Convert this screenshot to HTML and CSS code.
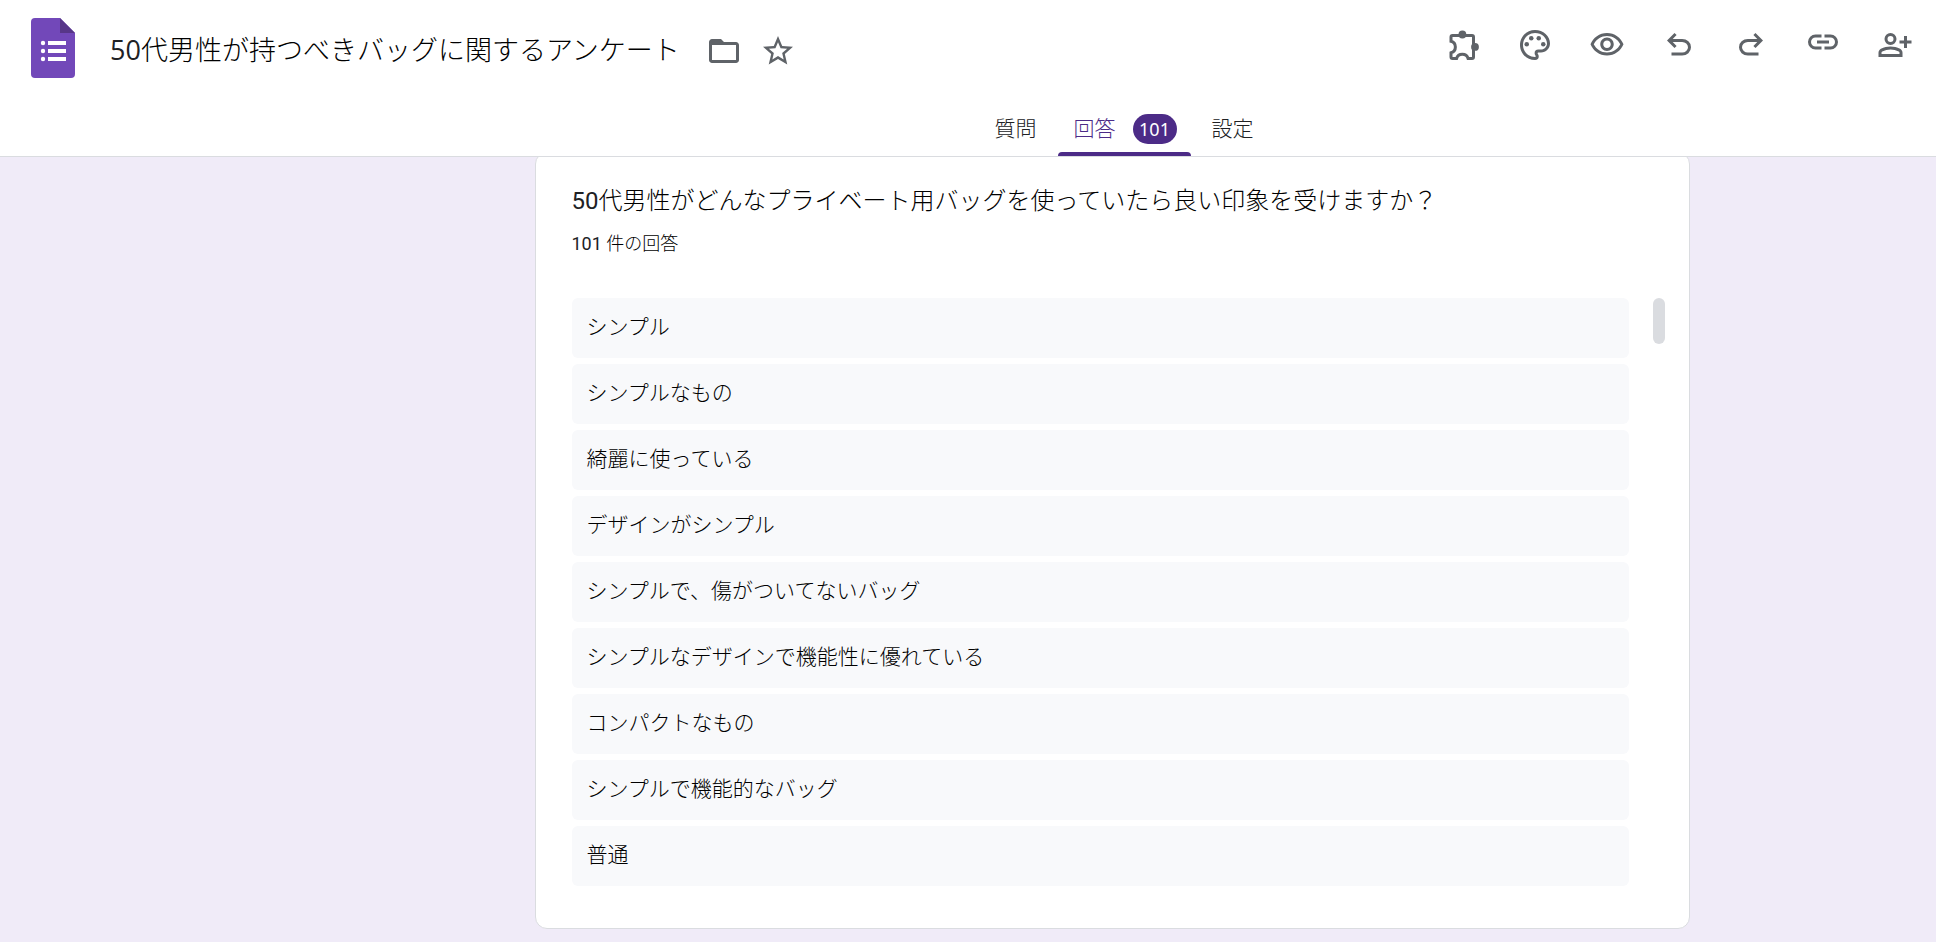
FILE: index.html
```
<!DOCTYPE html>
<html lang="ja">
<head>
<meta charset="utf-8">
<meta name="viewport" content="width=device-width, initial-scale=1">
<title>50代男性が持つべきバッグに関するアンケート</title>
<link rel="stylesheet" href="styles.css">
</head>
<body>
<header class="header">
  <div class="topbar">
    <div class="brand">
      <a class="logo" href="#" aria-label="フォーム ホーム">
        <svg width="44" height="60" viewBox="0 0 44 60" aria-hidden="true">
          <path fill="#7248b9" d="M4 0h25l15 15v41a4 4 0 0 1-4 4H4a4 4 0 0 1-4-4V4a4 4 0 0 1 4-4z"/>
          <path fill="#573688" d="M29 0l15 15H29z"/>
          <g fill="#fff">
            <circle cx="12" cy="25" r="2.2"/><circle cx="12" cy="33" r="2.2"/><circle cx="12" cy="41" r="2.2"/>
            <path d="M17 23h18v4H17zM17 31h18v4H17zM17 39h18v4H17z"/>
          </g>
        </svg>
      </a>
      <h1 class="title"><span class="title-number">50</span>代男性が持つべきバッグに関するアンケート</h1>
      <div class="title-actions">
        <button class="icon-button" type="button" aria-label="フォルダに移動">
          <svg class="icon" viewBox="0 0 24 24" aria-hidden="true"><path d="M4 20q-.825 0-1.412-.587T2 18V6q0-.825.588-1.412T4 4h6l2 2h8q.825 0 1.413.588T22 8v10q0 .825-.587 1.413T20 20zm0-2h16V8H4z"/></svg>
        </button>
        <button class="icon-button" type="button" aria-label="スターを付ける">
          <svg class="icon" viewBox="0 0 24 24" aria-hidden="true"><path d="M22 9.24l-7.19-.62L12 2 9.19 8.63 2 9.24l5.46 4.73L5.82 21 12 17.27 18.18 21l-1.63-7.03L22 9.24zM12 15.4l-3.76 2.27 1-4.28-3.32-2.88 4.38-.38L12 6.1l1.71 4.04 4.38.38-3.32 2.88 1 4.28L12 15.4z"/></svg>
        </button>
      </div>
    </div>
    <div class="toolbar">
      <button class="tool" type="button" aria-label="アドオン">
        <svg class="icon" viewBox="0 0 24 24" aria-hidden="true"><path fill="none" stroke="currentColor" stroke-width="2" d="M4 9.5V6.7a1 1 0 0 1 1-1h13a1 1 0 0 1 1 1V20a1 1 0 0 1-1 1h-2.6a4 4 0 0 0-7.7 0H5a1 1 0 0 1-1-1v-2.8a4 4 0 0 0 0-7.7z"/><circle cx="11.6" cy="5" r="2.6"/><circle cx="20" cy="13.3" r="2.6"/></svg>
      </button>
      <button class="tool" type="button" aria-label="テーマをカスタマイズ">
        <svg class="icon" viewBox="0 0 24 24" aria-hidden="true"><path d="M12 22C6.49 22 2 17.51 2 12S6.49 2 12 2s10 4.04 10 9c0 3.31-2.69 6-6 6h-1.77c-.28 0-.5.22-.5.5 0 .12.05.23.13.33.41.47.64 1.06.64 1.67A2.5 2.5 0 0 1 12 22zm0-18c-4.41 0-8 3.59-8 8s3.59 8 8 8c.28 0 .5-.22.5-.5a.54.54 0 0 0-.14-.35c-.41-.46-.63-1.05-.63-1.65a2.5 2.5 0 0 1 2.5-2.5H16c2.21 0 4-1.79 4-4 0-3.86-3.59-7-8-7z"/><circle cx="6.5" cy="11.5" r="1.5"/><circle cx="9.5" cy="7.5" r="1.5"/><circle cx="14.5" cy="7.5" r="1.5"/><circle cx="17.5" cy="11.5" r="1.5"/></svg>
      </button>
      <button class="tool" type="button" aria-label="プレビュー">
        <svg class="icon" viewBox="0 0 24 24" aria-hidden="true"><path d="M12 6c3.79 0 7.17 2.13 8.82 5.5C19.17 14.87 15.79 17 12 17s-7.17-2.13-8.82-5.5C4.83 8.13 8.21 6 12 6m0-2C7 4 2.73 7.11 1 11.5 2.73 15.89 7 19 12 19s9.27-3.11 11-7.5C21.27 7.11 17 4 12 4zm0 5c1.38 0 2.5 1.12 2.5 2.5S13.38 14 12 14s-2.5-1.12-2.5-2.5S10.62 9 12 9m0-2c-2.48 0-4.5 2.02-4.5 4.5S9.52 16 12 16s4.5-2.02 4.5-4.5S14.48 7 12 7z"/></svg>
      </button>
      <button class="tool" type="button" aria-label="元に戻す">
        <svg class="icon" viewBox="0 0 24 24" aria-hidden="true"><path d="M7 19v-2h7.1q1.575 0 2.738-1T18 13.5 16.838 11 14.1 10H7.8l2.6 2.6L9 14 4 9l5-5 1.4 1.4L7.8 8h6.3q2.425 0 4.163 1.575T20 13.5t-1.738 3.925T14.1 19z"/></svg>
      </button>
      <button class="tool" type="button" aria-label="やり直す">
        <svg class="icon" viewBox="0 0 24 24" aria-hidden="true"><path d="M9.9 19q-2.425 0-4.163-1.575T4 13.5t1.738-3.925T9.9 8h6.3l-2.6-2.6L15 4l5 5-5 5-1.4-1.4 2.6-2.6H9.9q-1.575 0-2.738 1T6 13.5 7.163 16 9.9 17H17v2z"/></svg>
      </button>
      <button class="tool" type="button" aria-label="回答者へのリンクをコピー">
        <svg class="icon" viewBox="0 2 24 24" aria-hidden="true"><path d="M11 17H7q-2.075 0-3.537-1.463T2 12t1.463-3.537T7 7h4v2H7q-1.25 0-2.125.875T4 12t.875 2.125T7 15h4zm-3-4v-2h8v2zm5 4v-2h4q1.25 0 2.125-.875T20 12t-.875-2.125T17 9h-4V7h4q2.075 0 3.538 1.463T22 12t-1.463 3.538T17 17z"/></svg>
      </button>
      <button class="tool" type="button" aria-label="共同編集者を追加">
        <svg class="icon" viewBox="0 0 24 24" aria-hidden="true"><path fill-rule="evenodd" d="M18 14v-3h-3V9h3V6h2v3h3v2h-3v3zM9 12q-1.65 0-2.825-1.175T5 8t1.175-2.825T9 4t2.825 1.175T13 8t-1.175 2.825T9 12zm0-2a2 2 0 1 0 0-4 2 2 0 0 0 0 4zM1 20v-2.8q0-.85.438-1.562T2.6 14.55q1.55-.775 3.15-1.162T9 13t3.25.388 3.15 1.162q.725.375 1.163 1.088T17 17.2V20zm2-2h12v-.8q0-.275-.137-.5t-.363-.35q-1.35-.675-2.725-1.012T9 15t-2.775.338T3.5 16.35q-.225.125-.363.35T3 17.2z"/></svg>
      </button>
    </div>
  </div>
  <nav class="tabs" aria-label="フォームの表示">
    <a class="tab" href="#">質問</a>
    <a class="tab tab-active" href="#" aria-current="page">回答 <span class="badge">101</span></a>
    <a class="tab" href="#">設定</a>
  </nav>
</header>
<main class="canvas">
  <section class="card">
    <h2 class="question"><span class="number">50</span>代男性がどんなプライベート用バッグを使っていたら良い印象を受けますか？</h2>
    <p class="count"><span class="number">101 </span>件の回答</p>
    <div class="responses">
      <ul class="answers">
        <li class="answer">シンプル</li>
        <li class="answer">シンプルなもの</li>
        <li class="answer">綺麗に使っている</li>
        <li class="answer">デザインがシンプル</li>
        <li class="answer">シンプルで、傷がついてないバッグ</li>
        <li class="answer">シンプルなデザインで機能性に優れている</li>
        <li class="answer">コンパクトなもの</li>
        <li class="answer">シンプルで機能的なバッグ</li>
        <li class="answer">普通</li>
      </ul>
      <div class="scrollbar"><div class="thumb"></div></div>
    </div>
  </section>
</main>
</body>
</html>
```
FILE: styles.css
```
* {
  box-sizing: border-box;
}

body {
  margin: 0;
  min-height: 100vh;
  background: #f0ebf8;
  color: #000;
  font-family: Roboto, "Noto Sans CJK JP", sans-serif;
  font-weight: 300;
}

h1, h2, p, ul {
  margin: 0;
  padding: 0;
}

button {
  padding: 0;
  border: 0;
  background: none;
  color: inherit;
  cursor: pointer;
}

.number {
  color: #202124;
  font-weight: 400;
}

/* Header */
.header {
  position: relative;
  z-index: 1;
  background: #fff;
  border-bottom: 1px solid #dadce0;
}

.topbar {
  display: flex;
  justify-content: space-between;
  align-items: flex-start;
  height: 102px;
  padding: 0 5px 0 31px;
}

.brand {
  display: flex;
  align-items: center;
  height: 96px;
}

.logo {
  display: flex;
  margin-right: 35px;
}

.title {
  padding-top: 4px;
  font-size: 27px;
  line-height: 36px;
  font-weight: 300;
  white-space: nowrap;
}

.title-number {
  color: #202124;
  font-family: "Open Sans", sans-serif;
  font-weight: 400;
}

.title-actions {
  display: flex;
  gap: 18px;
  margin-left: 26px;
  padding-top: 6px;
  color: #5f6368;
}

.icon-button,
.tool {
  display: flex;
  align-items: center;
  justify-content: center;
}

.icon {
  display: block;
  width: 36px;
  height: 36px;
  fill: currentColor;
}

.toolbar {
  display: flex;
  color: #5f6368;
}

.tool {
  width: 72px;
  height: 90px;
}

/* Tabs */
.tabs {
  display: flex;
  justify-content: center;
  gap: 5px;
  padding-left: 312px;
}

.tab {
  display: flex;
  align-items: center;
  gap: 17px;
  height: 54px;
  padding: 0 16px;
  border-radius: 4px 4px 0 0;
  color: #202124;
  font-size: 21px;
  line-height: 30px;
  text-decoration: none;
  position: relative;
}

.tab-active {
  padding-right: 14px;
  color: #4c2b87;
}

.tab-active::after {
  content: "";
  position: absolute;
  left: 0;
  right: 0;
  bottom: 0;
  height: 4px;
  border-radius: 4px 4px 0 0;
  background: #4c2b87;
}

.badge {
  min-width: 44px;
  padding: 0 6px;
  border-radius: 15px;
  background: #4c2b87;
  color: #fff;
  font-family: "Noto Sans", sans-serif;
  font-size: 18px;
  font-weight: 400;
  text-align: center;
}

/* Responses */
.canvas {
  display: flex;
  justify-content: center;
  padding: 0 0 13px 288px;
}

.card {
  flex: 0 1 1155px;
  margin-top: -5px;
  padding: 30px 24px 42px 36px;
  background: #fff;
  border: 1px solid #dadce0;
  border-radius: 12px;
}

.question {
  font-size: 24px;
  line-height: 36px;
  font-weight: 300;
}

.count {
  margin-top: 13px;
  font-size: 18px;
  line-height: 24px;
}

.responses {
  display: flex;
  gap: 24px;
  margin-top: 42px;
}

.answers {
  display: flex;
  flex: 1;
  flex-direction: column;
  gap: 6px;
  list-style: none;
}

.answer {
  padding: 14px 15px 16px;
  border-radius: 6px;
  background: #f8f9fb;
  font-size: 21px;
  line-height: 30px;
}

.scrollbar {
  width: 12px;
}

.thumb {
  height: 46px;
  border-radius: 6px;
  background: #dadce0;
}
```
